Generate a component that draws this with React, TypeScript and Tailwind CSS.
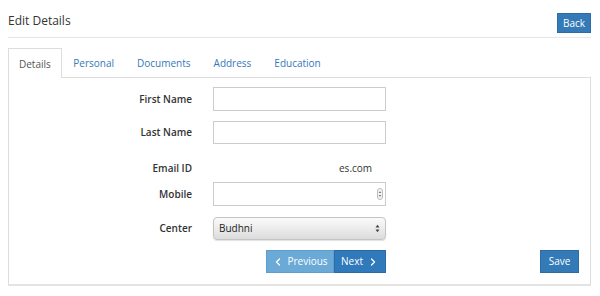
import React from 'react'
import { ChevronLeft, ChevronRight } from 'lucide-react'

const tabs = ['Details', 'Personal', 'Documents', 'Address', 'Education']

function Label({ children }: { children: React.ReactNode }) {
    return <div className="w-[183px] shrink-0 text-right text-[10px] font-semibold text-[#333]">{children}</div>
}

function Row({ label, children, className }: { label: string; children: React.ReactNode; className: string }) {
    return (
        <div className={`flex items-center ${className}`}>
            <Label>{label}</Label>
            <div className="ml-[21px] w-[173px]">{children}</div>
        </div>
    )
}

export default function App() {
    return (
        <div className="w-[600px] h-[296px] bg-white pl-2 pr-[9px] font-['Open_Sans',sans-serif] text-[#333]">
            <div className="flex h-[38px] items-start justify-between border-b border-[#e7e7e7]">
                <h1 className="mt-[12px] text-[12px] leading-[18px] text-[#333]">Edit Details</h1>
                <button className="mt-[13px] h-5 w-[34px] border border-[#2e6da4] bg-[#337ab7] text-[10px] leading-none text-white">
                    Back
                </button>
            </div>

            <div className="mt-[10px] flex h-[30px] border-b border-[#ddd]">
                {tabs.map((t, i) => (
                    <div
                        key={t}
                        className={
                            i === 0
                                ? 'relative -mb-px flex h-[30px] items-center border border-b-0 border-[#ddd] bg-white px-[10px] pt-[2px] text-[10px] text-[#555]'
                                : 'flex h-[29px] items-center px-[11.5px] pt-[2px] text-[10px] text-[#337ab7]'
                        }
                    >
                        {t}
                    </div>
                ))}
            </div>

            <div className="flex h-[208px] flex-col border-x border-b-2 border-[#ddd] border-b-[#e4e4e4] pt-[9px]">
                <Row label="First Name" className="h-6">
                    <div className="h-6 border border-[#ccc] bg-white" />
                </Row>
                <Row label="Last Name" className="mt-[10px] h-[23px]">
                    <div className="h-[23px] border border-[#ccc] bg-white" />
                </Row>
                <Row label="Email ID" className="mt-[16px] h-[17px]">
                    <div className="pl-[126px] text-[10px] text-[#333]">es.com</div>
                </Row>
                <Row label="Mobile" className="mt-[5px] h-6">
                    <div className="flex h-6 items-center justify-end border border-[#ccc] bg-white pr-[2px]">
                        <svg width="6" height="12" viewBox="0 0 6 12">
                            <rect x="0.5" y="0.5" width="5" height="11" rx="2.5" fill="#f4f4f4" stroke="#bbb" />
                            <path d="M1.6 5 L3 3.2 L4.4 5 Z" fill="#777" />
                            <path d="M1.6 7 L3 8.8 L4.4 7 Z" fill="#777" />
                        </svg>
                    </div>
                </Row>
                <Row label="Center" className="mt-[11px] h-[23px]">
                    <div className="flex h-[23px] items-center justify-between rounded-[4px] border border-[#c4c4c4] bg-gradient-to-b from-[#fafafa] via-[#ececec] to-[#dcdcdc] pl-[5px] pr-[5px] text-[10px] text-[#222] shadow-[0_1px_1px_rgba(0,0,0,0.12)]">
                        <span>Budhni</span>
                        <svg width="5" height="9" viewBox="0 0 5 9">
                            <path d="M0.5 3.6 L2.5 0.8 L4.5 3.6 Z" fill="#444" />
                            <path d="M0.5 5.4 L2.5 8.2 L4.5 5.4 Z" fill="#444" />
                        </svg>
                    </div>
                </Row>
                <div className="mt-[10px] flex h-[23px] items-center">
                    <div className="ml-[204px] flex w-[173px] justify-end">
                        <button className="flex h-[23px] w-[68px] items-center justify-center gap-[3px] border border-[#5e9fd0] bg-[#6ba9d6] text-[10px] text-white">
                            <ChevronLeft size={12} strokeWidth={2.5} />
                            Previous
                        </button>
                        <button className="flex h-[23px] w-[52px] items-center justify-center gap-[4px] border border-[#2a6da6] bg-[#3079bb] text-[10px] text-white">
                            Next
                            <ChevronRight size={12} strokeWidth={2.5} />
                        </button>
                    </div>
                    <button className="ml-auto mr-[11px] h-[23px] w-[39px] border border-[#2e6da4] bg-[#337ab7] text-[10px] text-white">
                        Save
                    </button>
                </div>
            </div>
        </div>
    )
}
